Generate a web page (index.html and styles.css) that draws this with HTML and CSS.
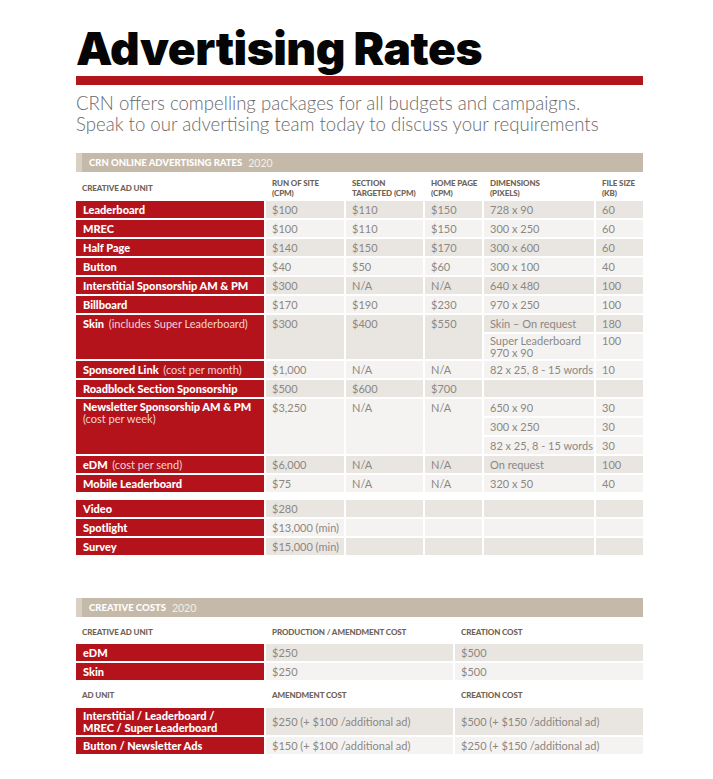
FILE: index.html
```html
<!DOCTYPE html>
<html lang="en">
<head>
<meta charset="utf-8">
<title>Advertising Rates</title>
<link rel="stylesheet" href="styles.css">
</head>
<body>
<div class="page">
  <h1 class="title">Advertising Rates</h1>
  <div class="title-bar"></div>
  <p class="intro">CRN offers compelling packages for all budgets and campaigns.<br>Speak to our advertising team today to discuss your requirements</p>

  <section class="rates-section">
    <div class="band"><strong>CRN ONLINE ADVERTISING RATES</strong><span class="year">2020</span></div>
    <div class="grid rates">
      <div class="h">CREATIVE AD UNIT</div>
      <div class="h">RUN OF SITE<br>(CPM)</div>
      <div class="h">SECTION<br>TARGETED (CPM)</div>
      <div class="h">HOME PAGE<br>(CPM)</div>
      <div class="h">DIMENSIONS<br>(PIXELS)</div>
      <div class="h">FILE SIZE<br>(KB)</div>

      <div class="lbl">Leaderboard</div>
      <div class="c d">$100</div><div class="c d">$110</div><div class="c d">$150</div><div class="c d">728 x 90</div><div class="c d">60</div>

      <div class="lbl">MREC</div>
      <div class="c">$100</div><div class="c">$110</div><div class="c">$150</div><div class="c">300 x 250</div><div class="c">60</div>

      <div class="lbl">Half Page</div>
      <div class="c d">$140</div><div class="c d">$150</div><div class="c d">$170</div><div class="c d">300 x 600</div><div class="c d">60</div>

      <div class="lbl">Button</div>
      <div class="c">$40</div><div class="c">$50</div><div class="c">$60</div><div class="c">300 x 100</div><div class="c">40</div>

      <div class="lbl">Interstitial Sponsorship AM &amp; PM</div>
      <div class="c d">$300</div><div class="c d">N/A</div><div class="c d">N/A</div><div class="c d">640 x 480</div><div class="c d">100</div>

      <div class="lbl">Billboard</div>
      <div class="c">$170</div><div class="c">$190</div><div class="c">$230</div><div class="c">970 x 250</div><div class="c">100</div>

      <div class="lbl span2">Skin <span class="note">(includes Super Leaderboard)</span></div>
      <div class="c d span2">$300</div><div class="c d span2">$400</div><div class="c d span2">$550</div>
      <div class="c d">Skin – On request</div><div class="c d">180</div>
      <div class="c tall">Super Leaderboard<br>970 x 90</div><div class="c tall">100</div>

      <div class="lbl">Sponsored Link <span class="note">(cost per month)</span></div>
      <div class="c">$1,000</div><div class="c">N/A</div><div class="c">N/A</div><div class="c">82 x 25, 8 - 15 words</div><div class="c">10</div>

      <div class="lbl">Roadblock Section Sponsorship</div>
      <div class="c d">$500</div><div class="c d">$600</div><div class="c d">$700</div><div class="c d"></div><div class="c d"></div>

      <div class="lbl span3 multi">Newsletter Sponsorship AM &amp; PM<br><span class="note">(cost per week)</span></div>
      <div class="c span3">$3,250</div><div class="c span3">N/A</div><div class="c span3">N/A</div>
      <div class="c">650 x 90</div><div class="c">30</div>
      <div class="c">300 x 250</div><div class="c">30</div>
      <div class="c">82 x 25, 8 - 15 words</div><div class="c">30</div>

      <div class="lbl">eDM <span class="note">(cost per send)</span></div>
      <div class="c d">$6,000</div><div class="c d">N/A</div><div class="c d">N/A</div><div class="c d">On request</div><div class="c d">100</div>

      <div class="lbl">Mobile Leaderboard</div>
      <div class="c">$75</div><div class="c">N/A</div><div class="c">N/A</div><div class="c">320 x 50</div><div class="c">40</div>
    </div>

    <div class="grid rates extras">
      <div class="lbl">Video</div>
      <div class="c d">$280</div><div class="c d"></div><div class="c d"></div><div class="c d"></div><div class="c d"></div>

      <div class="lbl">Spotlight</div>
      <div class="c">$13,000 (min)</div><div class="c"></div><div class="c"></div><div class="c"></div><div class="c"></div>

      <div class="lbl">Survey</div>
      <div class="c d">$15,000 (min)</div><div class="c d"></div><div class="c d"></div><div class="c d"></div><div class="c d"></div>
    </div>
  </section>

  <section class="costs-section">
    <div class="band"><strong>CREATIVE COSTS</strong><span class="year">2020</span></div>
    <div class="grid costs">
      <div class="h">CREATIVE AD UNIT</div>
      <div class="h">PRODUCTION / AMENDMENT COST</div>
      <div class="h">CREATION COST</div>

      <div class="lbl">eDM</div>
      <div class="c d">$250</div><div class="c d">$500</div>

      <div class="lbl">Skin</div>
      <div class="c">$250</div><div class="c">$500</div>

      <div class="h h2">AD UNIT</div>
      <div class="h h2">AMENDMENT COST</div>
      <div class="h h2">CREATION COST</div>

      <div class="lbl two">Interstitial / Leaderboard /<br>MREC / Super Leaderboard</div>
      <div class="c d mid">$250 (+ $100 /additional ad)</div><div class="c d mid">$500 (+ $150 /additional ad)</div>

      <div class="lbl">Button / Newsletter Ads</div>
      <div class="c">$150 (+ $100 /additional ad)</div><div class="c">$250 (+ $150 /additional ad)</div>
    </div>
  </section>
</div>
</body>
</html>
```

FILE: styles.css
```css
* {
  box-sizing: border-box;
}

html, body {
  margin: 0;
  padding: 0;
  background: #ffffff;
}

body {
  font-family: "Lato", "Open Sans", "Liberation Sans", sans-serif;
  color: #8c8782;
}

.page {
  width: 713px;
  padding: 25px 0 0 76px;
}

.title {
  margin: 0;
  font-family: "Inter", "Lato", "Liberation Sans", sans-serif;
  font-weight: 900;
  font-size: 46px;
  line-height: 46px;
  letter-spacing: -0.5px;
  color: #050505;
  white-space: nowrap;
}

.title-bar {
  width: 567px;
  height: 9px;
  margin-top: 5px;
  background: #b3151c;
}

.intro {
  margin: 8px 0 0 0;
  font-family: "Lato", "Open Sans", sans-serif;
  font-weight: 300;
  font-size: 18.6px;
  line-height: 21px;
  color: #6a6a6a;
  white-space: nowrap;
}

.rates-section {
  margin-top: 18px;
  width: 567px;
}

.costs-section {
  margin-top: 43px;
  width: 567px;
}

.band {
  height: 19px;
  background: #c5baa9;
  border-left: 6px solid #d8d0c4;
  padding-left: 7px;
  display: flex;
  align-items: center;
  color: #ffffff;
  font-size: 9.5px;
  white-space: nowrap;
}

.band strong {
  font-weight: 900;
  letter-spacing: 0;
}

.band .year {
  font-weight: 400;
  font-size: 10.5px;
  margin-left: 6px;
  color: #f4efe8;
}

.grid {
  display: grid;
  gap: 2px;
}

.rates {
  grid-template-columns: 188px 78px 77px 57px 110px 47px;
}

.costs {
  grid-template-columns: 188px 187px 188px;
}

.extras {
  margin-top: 8px;
}

.h {
  height: 27px;
  padding: 5px 2px 0 6px;
  display: flex;
  align-items: center;
  font-size: 8px;
  line-height: 10px;
  font-weight: 900;
  letter-spacing: -0.1px;
  color: #6f6356;
  white-space: nowrap;
}

.costs .h {
  height: 25px;
}

.costs .h.h2 {
  height: 24px;
  padding-top: 2px;
}

.lbl {
  background: #b5131c;
  color: #ffffff;
  font-weight: 900;
  font-size: 11px;
  line-height: 11px;
  padding: 3px 4px 3px 7px;
  min-height: 17px;
  white-space: nowrap;
}

.lbl .note {
  font-weight: 400;
  color: #f2d4d5;
  margin-left: 2px;
}

.lbl br + .note {
  margin-left: 0;
}

.lbl.multi {
  line-height: 12px;
  padding-top: 2px;
}

.lbl.two {
  line-height: 12px;
  padding-top: 2px;
  padding-bottom: 1px;
}

.c {
  background: #f4f3f1;
  font-size: 11px;
  line-height: 11px;
  padding: 3px 2px 3px 6px;
  min-height: 17px;
  color: #8c8782;
  white-space: nowrap;
}

.c.d {
  background: #e9e6e2;
}

.c.tall {
  line-height: 12px;
  padding-top: 1px;
  padding-bottom: 0;
}

.c.mid {
  display: flex;
  align-items: center;
}

.span2 {
  grid-row: span 2;
}

.span3 {
  grid-row: span 3;
}
```
